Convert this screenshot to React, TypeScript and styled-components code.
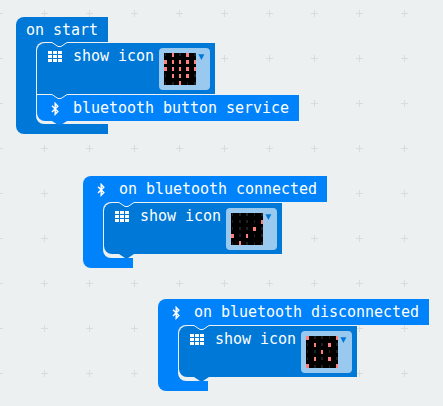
import React from "react";
import styled, { createGlobalStyle } from "styled-components";

const CANVAS = "#ecf0f1";
const BASIC = "#0078d7";
const BLUETOOTH = "#0082fb";

const GlobalStyle = createGlobalStyle`
  body {
    margin: 0;
    overflow: hidden;
  }
`;

const Workspace = styled.main`
  position: relative;
  width: 443px;
  height: 406px;
  overflow: hidden;
  background: ${CANVAS};
  font: 15px/20px "DejaVu Sans Mono", monospace;
  color: #fff;
`;

const GridLayer = styled.svg`
  position: absolute;
  inset: 0;
  width: 100%;
  height: 100%;
`;

const Container = styled.section<{ $x: number; $y: number; $color: string }>`
  --block: ${(p) => p.$color};
  position: absolute;
  left: ${(p) => p.$x}px;
  top: ${(p) => p.$y}px;
  display: flex;
  flex-direction: column;
  align-items: flex-start;
`;

const Header = styled.header<{ $width: number; $height: number; $padTop: number }>`
  box-sizing: border-box;
  display: flex;
  width: ${(p) => p.$width}px;
  height: ${(p) => p.$height}px;
  padding: ${(p) => p.$padTop}px 0 0 10px;
  border-top-left-radius: 8px;
  background: var(--block);
  white-space: pre;
`;

const Arm = styled.div`
  display: flex;
`;

const Spine = styled.div`
  width: 28px;
  margin-right: -8px;
  background: var(--block);
`;

const Slot = styled.div<{ $gap: number; $width: number }>`
  position: relative;
  display: flex;
  flex-direction: column;
  gap: 1px;
  align-items: flex-start;
  padding: 1px 0 ${(p) => p.$gap}px 1px;
  border-radius: 8px 0 0 8px;
  background: linear-gradient(${CANVAS}, ${CANVAS}) 0 0 / ${(p) => p.$width}px 100% no-repeat;
`;

const Footer = styled.footer<{ $width: number }>`
  width: ${(p) => p.$width}px;
  height: 10px;
  border-bottom-left-radius: 8px;
  background: var(--block);
`;

const Statement = styled.div<{
  $width: number;
  $height: number;
  $color: string;
  $first?: boolean;
  $last?: boolean;
}>`
  position: relative;
  box-sizing: border-box;
  display: flex;
  align-items: flex-start;
  width: ${(p) => p.$width}px;
  height: ${(p) => p.$height}px;
  padding: 3px 5px 0 11px;
  border-top-left-radius: ${(p) => (p.$first ? 8 : 0)}px;
  border-bottom-left-radius: ${(p) => (p.$last ? 8 : 0)}px;
  background: ${(p) => p.$color};
  white-space: pre;
`;

const IconCell = styled.span`
  display: flex;
  flex: none;
  width: 25px;
  padding-top: 5px;

  svg {
    display: block;
  }
`;

const BluetoothCell = styled(IconCell)<{ $inset: number; $width: number }>`
  box-sizing: border-box;
  width: ${(p) => p.$width}px;
  padding: 4px 0 0 ${(p) => p.$inset}px;
`;

const Label = styled.span`
  letter-spacing: -0.03px;
`;

const NotchSvg = styled.svg<{ $edge: "top" | "bottom" }>`
  position: absolute;
  z-index: 1;
  left: 13px;
  ${(p) => (p.$edge === "top" ? "top: -1px;" : "bottom: -5px;")}
`;

const IconField = styled.div`
  box-sizing: border-box;
  display: flex;
  gap: 2px;
  width: 51px;
  height: 42px;
  margin: 2px 0 0 auto;
  padding: 5px;
  border-radius: 4px;
  background: #99c9ef;

  svg {
    display: block;
    flex: none;
  }
`;

function Notch({ above }: { above: string }) {
  return (
    <NotchSvg $edge="top" width="19" height="6">
      <path d="M1 0H18V1H17L11 5H8L2 1H1Z" fill={above} />
      <path d="M0 .5H2L8 4.5H11L17 .5H19" fill="none" stroke={CANVAS} />
    </NotchSvg>
  );
}

function Tab({ color }: { color: string }) {
  return (
    <NotchSvg $edge="bottom" width="19" height="5">
      <path d="M2 0H17L11 4H8Z" fill={color} />
    </NotchSvg>
  );
}

function MatrixGlyph() {
  return (
    <IconCell>
      <svg width="14" height="11" fill="#fff" shapeRendering="crispEdges">
        {[0, 4, 8].flatMap((y) =>
          [0, 5, 10].map((x) => <rect key={`${x}-${y}`} x={x} y={y} width="4" height="3" />)
        )}
      </svg>
    </IconCell>
  );
}

function BluetoothGlyph({ inset, width }: { inset: number; width: number }) {
  return (
    <BluetoothCell $inset={inset} $width={width}>
      <svg width="9" height="14" fill="none" stroke="#fff" strokeWidth="1.45">
        <path d="M1 3.7 6.8 9.4 4.2 12.2V1.4L6.8 4.2 1 9.9" />
      </svg>
    </BluetoothCell>
  );
}

const LED_COLUMNS = [
  { x: 0, w: 3 },
  { x: 8, w: 2 },
  { x: 15, w: 2 },
  { x: 22, w: 3 },
  { x: 30, w: 2 },
];

function LedPicker({ rows }: { rows: string[] }) {
  return (
    <IconField>
      <svg width="32" height="32" shapeRendering="crispEdges">
        <rect width="32" height="32" fill="#000" />
        {rows.flatMap((row, r) =>
          LED_COLUMNS.map(({ x, w }, c) => {
            const lit = row[c] === "#";
            return (
              <rect
                key={`${r}-${c}`}
                x={!lit && c === 0 ? 1 : !lit && c === 3 ? 23 : x}
                y={lit ? r * 7 : r * 7 + (r === 4 ? 1 : 0)}
                width={lit ? w : c === 0 || c === 3 ? 1 : 2}
                height={lit ? 4 : 3}
                fill={lit ? "#ff7f7f" : "#202020"}
              />
            );
          })
        )}
      </svg>
      <svg width="7" height="8">
        <path d="M.4 1.2H6.4L3.4 7Z" fill={BASIC} />
      </svg>
    </IconField>
  );
}

function ShowIcon({ rows, above, last }: { rows: string[]; above: string; last?: boolean }) {
  return (
    <Statement $width={178} $height={51} $color={BASIC} $first $last={last}>
      <Notch above={above} />
      <MatrixGlyph />
      <Label>show icon</Label>
      <LedPicker rows={rows} />
      {last && <Tab color={BASIC} />}
    </Statement>
  );
}

const HEART = [".#.#.", "#####", "#####", ".###.", "..#.."];
const CHECK = [".....", "....#", "...#.", "#.#..", ".#..."];
const CROSS = ["#...#", ".#.#.", "..#..", ".#.#.", "#...#"];

function BluetoothEvent(props: {
  x: number;
  y: number;
  width: number;
  label: string;
  rows: string[];
}) {
  return (
    <Container $x={props.x} $y={props.y} $color={BLUETOOTH}>
      <Header $width={props.width} $height={26} $padTop={3}>
        <BluetoothGlyph inset={4} width={26} />
        <Label>{props.label}</Label>
      </Header>
      <Arm>
        <Spine />
        <Slot $gap={4} $width={178}>
          <ShowIcon rows={props.rows} above={BLUETOOTH} last />
        </Slot>
      </Arm>
      <Footer $width={50} />
    </Container>
  );
}

export default function App() {
  return (
    <>
      <GlobalStyle />
      <Workspace>
        <GridLayer>
          <defs>
            <pattern id="grid" x="22" y="-9" width="45" height="45" patternUnits="userSpaceOnUse">
              <path d="M19 22.5H26M22.5 19V26" stroke="#d8dcdd" fill="none" />
            </pattern>
          </defs>
          <rect width="443" height="406" fill="url(#grid)" />
        </GridLayer>

        <Container $x={16} $y={17} $color={BASIC}>
          <Header $width={92} $height={25} $padTop={3}>
            <Label>on start</Label>
          </Header>
          <Arm>
            <Spine />
            <Slot $gap={3} $width={179}>
              <ShowIcon rows={HEART} above={BASIC} />
              <Statement $width={262} $height={26} $color={BLUETOOTH} $last>
                <Notch above={BASIC} />
                <BluetoothGlyph inset={3} width={25} />
                <Label>bluetooth button service</Label>
                <Tab color={BLUETOOTH} />
              </Statement>
            </Slot>
          </Arm>
          <Footer $width={92} />
        </Container>

        <BluetoothEvent x={83} y={176} width={244} label="on bluetooth connected" rows={CHECK} />
        <BluetoothEvent x={158} y={299} width={271} label="on bluetooth disconnected" rows={CROSS} />
      </Workspace>
    </>
  );
}
